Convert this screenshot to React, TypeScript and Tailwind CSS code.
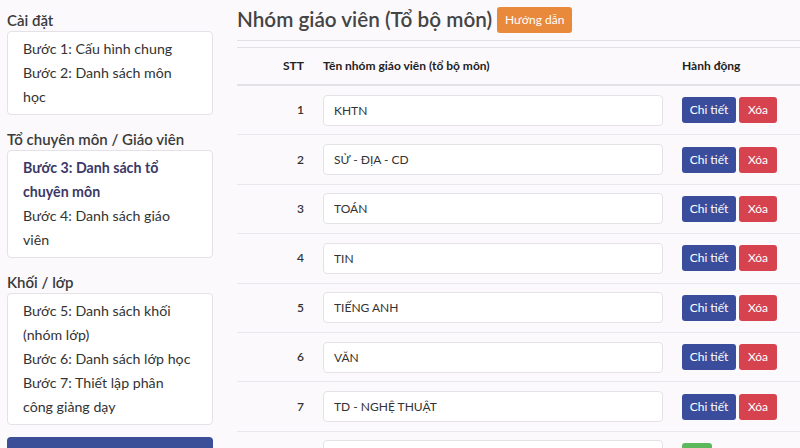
import React from "react";

const groups = [
  "KHTN",
  "SỬ - ĐỊA - CD",
  "TOÁN",
  "TIN",
  "TIẾNG ANH",
  "VĂN",
  "TD - NGHỆ THUẬT",
  "",
];

const sections = [
  {
    title: "Cài đặt",
    items: [
      { label: "Bước 1: Cấu hình chung" },
      { label: "Bước 2: Danh sách môn học" },
    ],
  },
  {
    title: "Tổ chuyên môn / Giáo viên",
    items: [
      { label: "Bước 3: Danh sách tổ chuyên môn", active: true },
      { label: "Bước 4: Danh sách giáo viên" },
    ],
  },
  {
    title: "Khối / lớp",
    items: [
      { label: "Bước 5: Danh sách khối (nhóm lớp)" },
      { label: "Bước 6: Danh sách lớp học" },
      { label: "Bước 7: Thiết lập phân công giảng dạy" },
    ],
  },
];

export default function App() {
  return (
    <div
      className="flex h-[448px] w-[800px] overflow-hidden bg-[#fcf9fc] text-[#333]"
      style={{ fontFamily: "Lato, 'Noto Sans', sans-serif" }}
    >
      {/* Sidebar */}
      <aside className="w-[213px] shrink-0 pl-[7px] pt-[10px]">
        {sections.map((s, i) => (
          <div key={s.title} className={i > 0 ? "mt-[14px]" : ""}>
            <h3 className="mb-px h-[20px] text-[15px] font-semibold leading-[20px] text-[#3a3a3a]">
              {s.title}
            </h3>
            <div className="rounded-[4px] border border-[#e4e2e6] bg-white py-[5px] pl-[15px] pr-[20px]">
              {s.items.map((it) => (
                <div
                  key={it.label}
                  className={
                    it.active
                      ? "text-[14.2px] font-bold leading-[24px] text-[#3b3768]"
                      : "text-[14.2px] leading-[24px] text-[#333]"
                  }
                >
                  {it.label}
                </div>
              ))}
            </div>
          </div>
        ))}
        <div className="mt-[12px] h-[30px] rounded-[4px] bg-[#3a4f98]" />
      </aside>

      {/* Main */}
      <main className="min-w-0 flex-1 pl-[24px]">
        <div className="flex h-[40px] items-center gap-[5px]">
          <h1 className="mb-[3px] text-[20.7px] font-semibold leading-[28px] text-[#444]">
            Nhóm giáo viên (Tổ bộ môn)
          </h1>
          <button className="h-[26px] rounded-[3px] bg-[#e8893b] px-[8px] text-[12px] text-white">
            Hướng dẫn
          </button>
        </div>
        <div className="border-t border-[#e3e1e5]" />

        <div className="mt-[6px] border-t border-[#e3e1e5]">
          <div className="grid h-[38px] grid-cols-[76px_359px_1fr] items-center border-b-2 border-[#e3e1e5] text-[12px] font-bold text-[#222]">
            <div className="pr-[9px] text-right">STT</div>
            <div className="pl-[10px]">Tên nhóm giáo viên (tổ bộ môn)</div>
            <div className="pl-[10px]">Hành động</div>
          </div>
          {groups.map((g, i) => (
            <div
              key={i}
              className="grid h-[49.4px] grid-cols-[76px_359px_1fr] items-center border-b border-[#e9e7eb]"
            >
              <div className="pr-[9px] text-right text-[12px] font-semibold text-[#333]">
                {g ? i + 1 : ""}
              </div>
              <div className="pl-[10px] pr-[9px]">
                <input
                  readOnly
                  value={g}
                  className="h-[31px] w-full rounded-[4px] border border-[#e4e2e6] bg-white px-[10px] text-[12px] text-[#333] outline-none"
                />
              </div>
              <div className="flex gap-[3px] pl-[10px]">
                {g ? (
                  <>
                    <button className="h-[26px] w-[54px] rounded-[3px] bg-[#3a4d9c] text-[12px] text-white">
                      Chi tiết
                    </button>
                    <button className="h-[26px] w-[38px] rounded-[3px] bg-[#d6434f] text-[12px] text-white">
                      Xóa
                    </button>
                  </>
                ) : (
                  <button className="h-[26px] w-[30px] rounded-[3px] bg-[#5cb85c]" />
                )}
              </div>
            </div>
          ))}
        </div>
      </main>
    </div>
  );
}
